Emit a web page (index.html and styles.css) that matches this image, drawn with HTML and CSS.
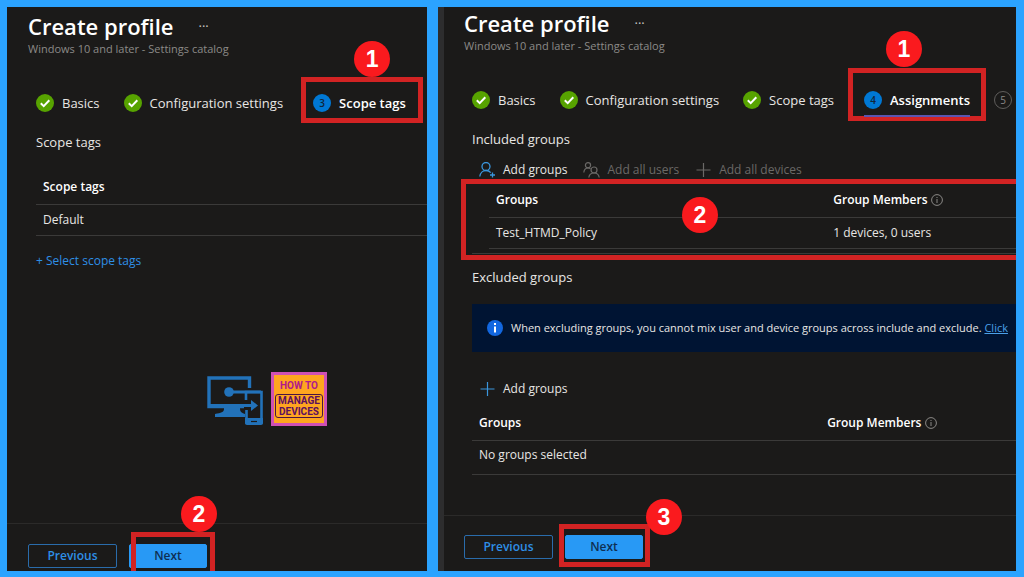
FILE: index.html
```html
<!DOCTYPE html>
<html lang="en">

<head>
  <meta charset="UTF-8">
  <title>Create profile</title>
  <link rel="stylesheet" href="styles.css">
</head>

<body>
  <!-- shared icons -->
  <svg class="sprite" aria-hidden="true">
    <symbol id="check" viewBox="0 0 18 18">
      <circle cx="9" cy="9" r="9" fill="#57a300" />
      <path d="M4.8 9.2l2.9 2.9 5.6-5.9" fill="none" stroke="#fff" stroke-width="2" />
    </symbol>
    <symbol id="info" viewBox="0 0 12 12">
      <circle cx="6" cy="6" r="5.4" fill="none" stroke="#8a8886" stroke-width="1" />
      <path d="M6 5v4M6 3v1" stroke="#8a8886" stroke-width="1" />
    </symbol>
    <symbol id="plus" viewBox="0 0 14 14">
      <path d="M7 0v14M0 7h14" stroke="currentColor" stroke-width="1.2" />
    </symbol>
  </svg>

  <main class="panel">
    <header class="heading">
      <h1>Create profile</h1>
      <button class="more" aria-label="More">···</button>
    </header>
    <p class="subtitle">Windows 10 and later - Settings catalog</p>

    <nav class="steps">
      <button class="step"><svg class="step-icon"><use href="#check" /></svg>Basics</button>
      <button class="step"><svg class="step-icon"><use href="#check" /></svg>Configuration settings</button>
      <button class="step current"><span class="step-icon number">3</span>Scope tags
        <span class="highlight highlight-scope"><span class="badge">1</span></span>
      </button>
    </nav>

    <section class="content">
      <h2>Scope tags</h2>
      <table class="scope-table">
        <thead>
          <tr><th>Scope tags</th></tr>
        </thead>
        <tbody>
          <tr><td>Default</td></tr>
        </tbody>
      </table>
      <a class="select-link" href="#">+ Select scope tags</a>

      <div class="logo">
        <svg class="devices" viewBox="0 0 56 50" aria-hidden="true">
          <path d="M42.500 12V2H2v28.500h35" fill="none" stroke="#2272b9" stroke-width="3.400" />
          <path d="M17 31h16v2c0 3 2 4 5 5v3H8v-3c6-1 9-2 9-5z" fill="#2272b9" />
          <path d="M38 15h18v32H38z" fill="#1b1a19" />
          <path d="M39 24V16h15.500v30.500H39.500V34" fill="none" stroke="#2272b9" stroke-width="2.600" />
          <path d="M38 42h18v5a2 2 0 0 1-2 2H40a2 2 0 0 1-2-2z" fill="#2272b9" />
          <path d="M44 45.500h6" stroke="#1b1a19" stroke-width="1.200" />
          <circle cx="22" cy="16" r="4.800" fill="#2272b9" />
          <path d="M22 16h32M2 29.500h43" stroke="#2272b9" stroke-width="3" />
          <path d="M44 24l7 5.500-7 5.500z" fill="#2272b9" />
        </svg>
        <div class="brand">
          <span class="brand-top">HOW TO</span>
          <span class="brand-box">MANAGE<br>DEVICES</span>
        </div>
      </div>
    </section>

    <footer class="actions">
      <button class="btn">Previous</button>
      <div class="marked">
        <button class="btn primary">Next</button>
        <span class="highlight highlight-scope-next"><span class="badge">2</span></span>
      </div>
    </footer>
  </main>

  <main class="panel panel-right">
    <header class="heading">
      <h1>Create profile</h1>
      <button class="more" aria-label="More">···</button>
    </header>
    <p class="subtitle">Windows 10 and later - Settings catalog</p>

    <nav class="steps">
      <button class="step"><svg class="step-icon"><use href="#check" /></svg>Basics</button>
      <button class="step"><svg class="step-icon"><use href="#check" /></svg>Configuration settings</button>
      <button class="step"><svg class="step-icon"><use href="#check" /></svg>Scope tags</button>
      <button class="step current underlined"><span class="step-icon number">4</span>Assignments
        <span class="highlight highlight-assign"><span class="badge">1</span></span>
      </button>
      <button class="step"><span class="step-icon number pending">5</span></button>
    </nav>

    <section class="content">
      <h2>Included groups</h2>
      <div class="toolbar">
        <button class="tool">
          <svg class="user-icon" viewBox="0 0 17 16" fill="none" stroke="#3a96dd" stroke-width="1.300">
            <circle cx="7" cy="4.500" r="4" />
            <path d="M.8 14.500c.4-3.600 3-6 6.200-6 2 0 3.600.8 4.700 2.200M13.500 10.500v5M11 13h5" />
          </svg>Add groups</button>
        <button class="tool" disabled>
          <svg class="user-icon" viewBox="0 0 17 16" fill="none" stroke="currentColor" stroke-width="1.200">
            <circle cx="5" cy="3.200" r="2.600" />
            <path d="M.8 10.500c.3-2.800 2-4.500 4.200-4.500 1 0 1.800.3 2.500.9" />
            <circle cx="11" cy="8" r="3" />
            <path d="M5.800 15.500c.4-2.800 2.500-4.500 5.200-4.500s4.800 1.700 5.200 4.500" />
          </svg>Add all users</button>
        <button class="tool" disabled><svg class="plus-icon"><use href="#plus" /></svg>Add all devices</button>
      </div>

      <div class="included">
        <table class="group-table">
          <thead>
            <tr>
              <th>Groups</th>
              <th>Group Members <svg class="info-icon"><use href="#info" /></svg></th>
            </tr>
          </thead>
          <tbody>
            <tr>
              <td>Test_HTMD_Policy</td>
              <td>1 devices, 0 users</td>
            </tr>
          </tbody>
        </table>
        <span class="highlight highlight-groups"><span class="badge">2</span></span>
      </div>

      <h2>Excluded groups</h2>
      <div class="banner">
        <svg class="banner-icon" viewBox="0 0 16 16" aria-hidden="true">
          <circle cx="8" cy="8" r="8" fill="#1267e0" />
          <path d="M8 6.500V12.500M8 3v2" stroke="#fff" stroke-width="2" />
        </svg>
        <p>When excluding groups, you cannot mix user and device groups across include and exclude. <a href="#">Click</a></p>
      </div>

      <div class="toolbar toolbar-excluded">
        <button class="tool"><svg class="plus-icon blue"><use href="#plus" /></svg>Add groups</button>
      </div>
      <table class="group-table excluded-table">
        <thead>
          <tr>
            <th>Groups</th>
            <th>Group Members <svg class="info-icon"><use href="#info" /></svg></th>
          </tr>
        </thead>
        <tbody>
          <tr><td colspan="2">No groups selected</td></tr>
        </tbody>
      </table>
    </section>

    <footer class="actions">
      <button class="btn">Previous</button>
      <div class="marked">
        <button class="btn primary">Next</button>
        <span class="highlight highlight-next"><span class="badge">3</span></span>
      </div>
    </footer>
  </main>
</body>

</html>
```
FILE: styles.css
```css
* {
  box-sizing: border-box;
}

body {
  display: grid;
  grid-template-columns: minmax(0, 420fr) minmax(0, 578fr);
  gap: 11px;
  min-height: 100vh;
  margin: 0;
  padding: 7px 8px 6px 7px;
  background-color: #2ba3ff;
  color: #e8e6e4;
  font-family: "Open Sans", "Noto Sans", sans-serif;
  font-size: 13px;
  line-height: 20px;
}

button {
  padding: 0;
  border: none;
  background: none;
  color: inherit;
  font: inherit;
  white-space: nowrap;
  cursor: pointer;
}

h1,
h2,
p {
  margin: 0;
}

.sprite {
  position: absolute;
  width: 0;
  height: 0;
}

.panel {
  display: flex;
  flex-direction: column;
  overflow: hidden;
  padding-top: 5px;
  background-color: #1b1a19;
}

.panel-right {
  padding-top: 2px;
  border-left: 6px solid #2d2d2e;
}

.heading {
  display: flex;
  gap: 25px;
  padding-left: 21px;
}

.panel-right .heading,
.panel-right .subtitle {
  padding-left: 20px;
}

h1 {
  color: #fff;
  font-size: 22px;
  font-weight: 600;
  line-height: 28px;
}

.more {
  color: #c8c6c4;
}

.subtitle {
  padding-left: 21px;
  color: #8c8a88;
  font-size: 11px;
  line-height: 18px;
}

/* wizard steps */
.steps {
  display: flex;
  gap: 24px;
  margin-top: 35px;
  padding-left: 29px;
}

.panel-right .steps {
  padding-left: 28px;
}

.step {
  position: relative;
  display: flex;
  flex-shrink: 0;
  align-items: center;
  gap: 8px;
  height: 20px;
}

.step-icon {
  width: 18px;
  height: 18px;
}

.number {
  border-radius: 50%;
  background-color: #0078d4;
  color: #10253a;
  font-size: 10px;
  line-height: 18px;
  text-align: center;
}

.pending {
  border: 1px solid #605e5c;
  background: none;
  color: #8a8886;
  line-height: 16px;
}

.current {
  margin-left: 6px;
  color: #fff;
  font-weight: 600;
}

.underlined::after {
  content: "";
  position: absolute;
  right: 0;
  bottom: -7px;
  left: 0;
  height: 2px;
  background-color: #5a55b0;
}

/* red callouts */
.highlight {
  position: absolute;
  border: 5px solid #d22323;
  pointer-events: none;
}

.badge {
  position: absolute;
  width: 36px;
  height: 36px;
  border-radius: 50%;
  background-color: #fa1a1e;
  color: #fff;
  font-family: "Liberation Sans", Arial, sans-serif;
  font-size: 23px;
  font-weight: 700;
  line-height: 36px;
  text-align: center;
}

.highlight-scope {
  inset: -16px -17px -10px -12px;
}

.highlight-scope .badge {
  top: -41px;
  left: 48px;
}

.highlight-assign {
  inset: -22px -16px -11px -16px;
}

.highlight-assign .badge {
  top: -42px;
  left: 33px;
}

.highlight-groups {
  inset: -4px -10px -7px -11px;
}

.highlight-groups .badge {
  top: 13px;
  left: 216px;
}

.highlight-next {
  inset: -11px -7px -8px -6px;
}

.highlight-next .badge {
  top: -30px;
  right: -37px;
}

/* this one runs off the bottom of the panel */
.highlight-scope-next {
  inset: -12px -8px -12px 2px;
}

.highlight-scope-next .badge {
  top: -41px;
  right: -7px;
}

/* page content */
.content {
  margin-top: 19px;
  padding-left: 29px;
}

.panel-right .content {
  padding-left: 28px;
}

h2 {
  font-size: 13px;
  font-weight: 400;
  line-height: 20px;
}

table {
  width: 100%;
  border-collapse: separate;
  border-spacing: 0;
  table-layout: fixed;
}

th,
td {
  padding: 0 7px;
  border-bottom: 1px solid #3b3a39;
  font-size: 12px;
  text-align: left;
}

th {
  height: 35px;
  color: #fff;
  font-weight: 600;
}

td {
  height: 31px;
}

.scope-table {
  margin-top: 18px;
}

.select-link {
  display: inline-block;
  margin-top: 15px;
  color: #2e8fe6;
  font-size: 12px;
  text-decoration: none;
}

.logo {
  display: flex;
  gap: 8px;
  margin-top: 101px;
  padding-left: 171px;
}

.devices {
  width: 56px;
  height: 50px;
  margin-top: 4px;
}

.brand {
  display: flex;
  flex-direction: column;
  align-items: center;
  width: 56px;
  height: 54px;
  padding-top: 4px;
  border: 3px solid #cf50b4;
  background-color: #ffa51f;
  font-family: Roboto, "Liberation Sans", sans-serif;
  font-size: 10px;
  font-weight: 700;
}

.brand-top {
  color: #b01a8c;
  line-height: 13px;
}

.brand-box {
  width: 48px;
  margin-top: 2px;
  border: 1px solid #4b1442;
  border-radius: 3px;
  color: #5c1060;
  line-height: 11px;
  text-align: center;
}

.toolbar {
  display: flex;
  gap: 16px;
  margin-top: 11px;
  padding-left: 7px;
}

.tool {
  display: flex;
  align-items: center;
  gap: 7px;
  font-size: 12px;
}

.tool:disabled {
  color: #6b6967;
}

.user-icon {
  width: 17px;
  height: 16px;
}

.plus-icon {
  width: 17px;
  height: 14px;
}

.blue {
  color: #3a96dd;
}

.included {
  position: relative;
  margin: 3px 0 13px;
  padding: 0 0 4px 17px;
  border-bottom: 1px solid #3b3a39;
}

.group-table th:first-child {
  width: 64%;
}

.info-icon {
  width: 12px;
  height: 12px;
  vertical-align: -2px;
}

.banner {
  display: flex;
  align-items: center;
  gap: 8px;
  height: 48px;
  margin-top: 17px;
  padding-left: 15px;
  background-color: #001433;
  font-size: 11px;
  white-space: nowrap;
}

.banner-icon {
  flex-shrink: 0;
  width: 16px;
  height: 16px;
}

.banner a {
  color: #4ba0e8;
}

.toolbar-excluded {
  margin-top: 27px;
}

.excluded-table {
  margin-top: 7px;
}

.excluded-table td {
  height: 34px;
  padding-bottom: 6px;
}

/* bottom buttons */
.actions {
  display: flex;
  gap: 12px;
  height: 48px;
  margin-top: auto;
  padding: 20px 0 0 21px;
  border-top: 1px solid #2b2a29;
}

.panel-right .actions {
  height: 56px;
  padding: 19px 0 0 20px;
}

.btn {
  width: 89px;
  height: 24px;
  border: 1px solid #2a6cab;
  border-radius: 2px;
  color: #2e8fe6;
  font-size: 12px;
  font-weight: 600;
  line-height: 22px;
}

.marked {
  position: relative;
  height: 24px;
}

.primary {
  width: 78px;
  border-color: #2899f5;
  background-color: #2899f5;
  color: #0f2f52;
}
```
